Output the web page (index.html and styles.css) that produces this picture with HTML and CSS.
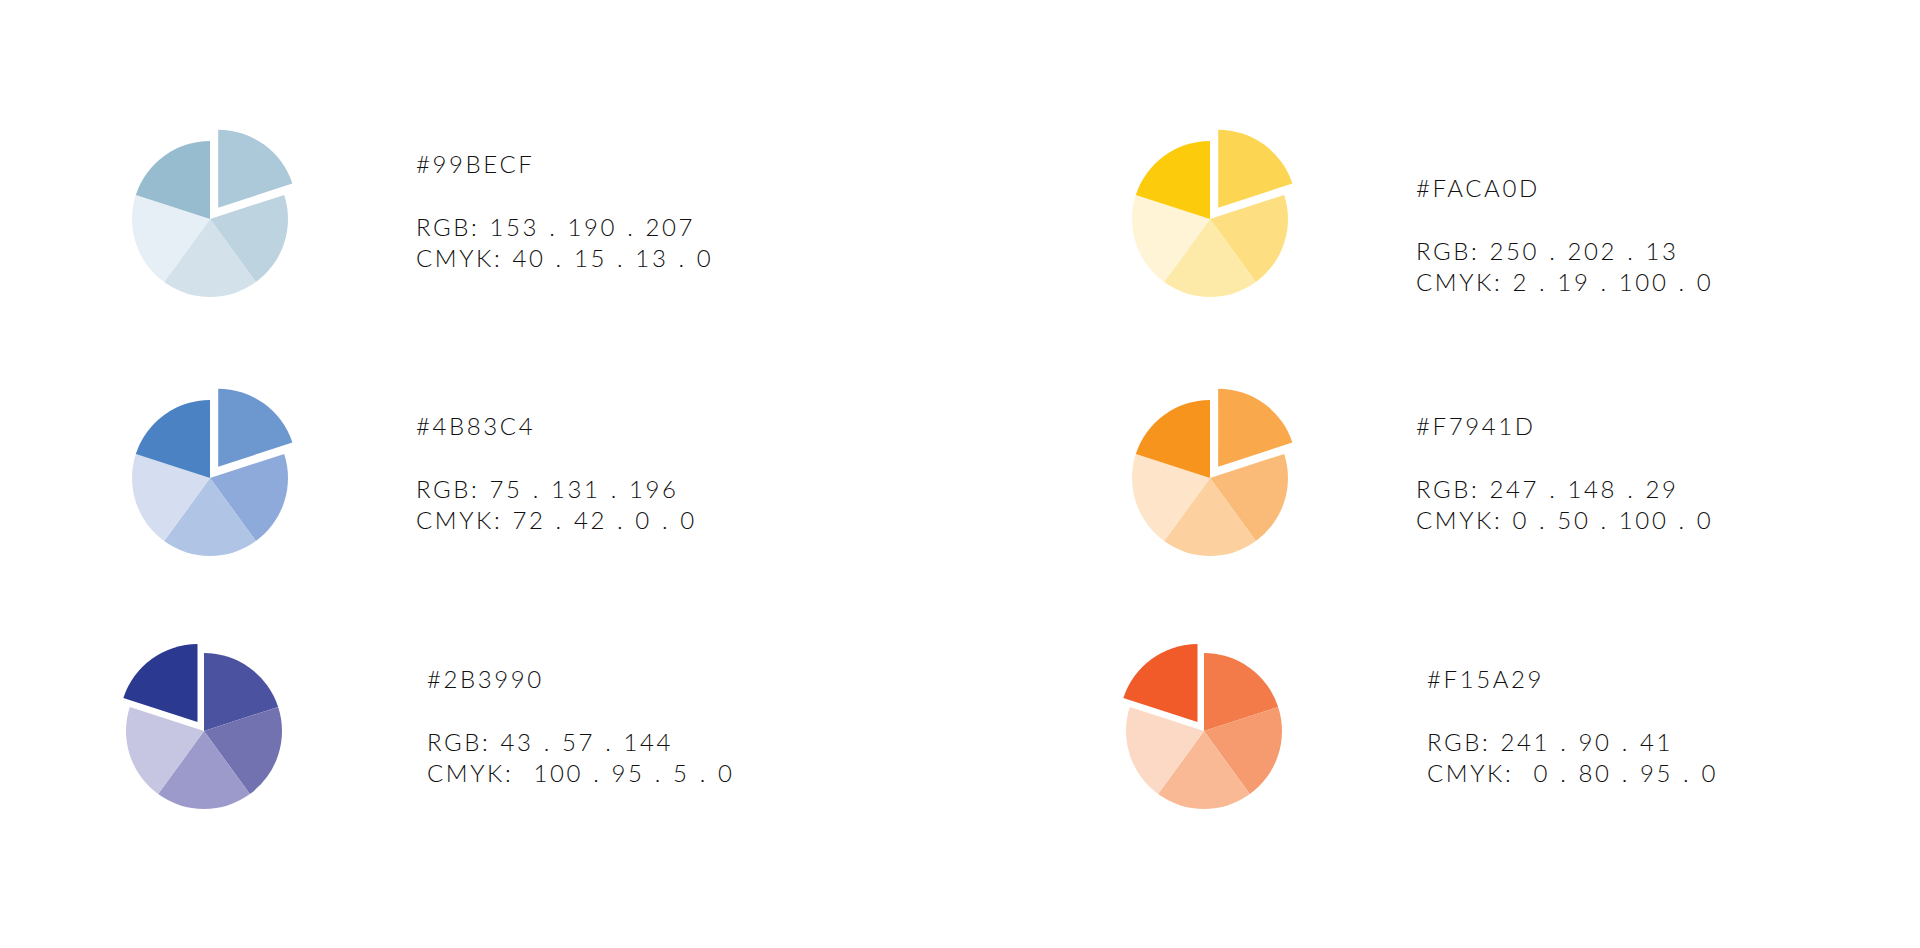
FILE: index.html
```html
<!DOCTYPE html>
<html lang="en">
<head>
<meta charset="utf-8">
<title>Colour palette</title>
<link rel="stylesheet" href="styles.css">
</head>
<body>
<main class="palette">
  <section class="swatch swatch--first pie-sky">
    <svg class="pie" viewBox="-90 -90 180 180" aria-hidden="true">
      <path class="slice slice-b" d="M0 0 L74.18 -24.1 A78 78 0 0 1 45.85 63.1 Z"/>
      <path class="slice slice-c" d="M0 0 L45.85 63.1 A78 78 0 0 1 -45.85 63.1 Z"/>
      <path class="slice slice-d" d="M0 0 L-45.85 63.1 A78 78 0 0 1 -74.18 -24.1 Z"/>
      <path class="slice slice-e" d="M0 0 L-74.18 -24.1 A78 78 0 0 1 0 -78 Z"/>
      <path class="slice slice-a out-right" d="M0 0 L0 -78 A78 78 0 0 1 74.18 -24.1 Z"/>
    </svg>
    <div class="info">
      <p class="hex">#99BECF</p>
      <p>RGB: 153 . 190 . 207</p>
      <p>CMYK: 40 . 15 . 13 . 0</p>
    </div>
  </section>

  <section class="swatch swatch--top-right pie-sun">
    <svg class="pie" viewBox="-90 -90 180 180" aria-hidden="true">
      <path class="slice slice-b" d="M0 0 L74.18 -24.1 A78 78 0 0 1 45.85 63.1 Z"/>
      <path class="slice slice-c" d="M0 0 L45.85 63.1 A78 78 0 0 1 -45.85 63.1 Z"/>
      <path class="slice slice-d" d="M0 0 L-45.85 63.1 A78 78 0 0 1 -74.18 -24.1 Z"/>
      <path class="slice slice-e" d="M0 0 L-74.18 -24.1 A78 78 0 0 1 0 -78 Z"/>
      <path class="slice slice-a out-right" d="M0 0 L0 -78 A78 78 0 0 1 74.18 -24.1 Z"/>
    </svg>
    <div class="info">
      <p class="hex">#FACA0D</p>
      <p>RGB: 250 . 202 . 13</p>
      <p>CMYK: 2 . 19 . 100 . 0</p>
    </div>
  </section>

  <section class="swatch pie-azure">
    <svg class="pie" viewBox="-90 -90 180 180" aria-hidden="true">
      <path class="slice slice-b" d="M0 0 L74.18 -24.1 A78 78 0 0 1 45.85 63.1 Z"/>
      <path class="slice slice-c" d="M0 0 L45.85 63.1 A78 78 0 0 1 -45.85 63.1 Z"/>
      <path class="slice slice-d" d="M0 0 L-45.85 63.1 A78 78 0 0 1 -74.18 -24.1 Z"/>
      <path class="slice slice-e" d="M0 0 L-74.18 -24.1 A78 78 0 0 1 0 -78 Z"/>
      <path class="slice slice-a out-right" d="M0 0 L0 -78 A78 78 0 0 1 74.18 -24.1 Z"/>
    </svg>
    <div class="info">
      <p class="hex">#4B83C4</p>
      <p>RGB: 75 . 131 . 196</p>
      <p>CMYK: 72 . 42 . 0 . 0</p>
    </div>
  </section>

  <section class="swatch pie-amber">
    <svg class="pie" viewBox="-90 -90 180 180" aria-hidden="true">
      <path class="slice slice-b" d="M0 0 L74.18 -24.1 A78 78 0 0 1 45.85 63.1 Z"/>
      <path class="slice slice-c" d="M0 0 L45.85 63.1 A78 78 0 0 1 -45.85 63.1 Z"/>
      <path class="slice slice-d" d="M0 0 L-45.85 63.1 A78 78 0 0 1 -74.18 -24.1 Z"/>
      <path class="slice slice-e" d="M0 0 L-74.18 -24.1 A78 78 0 0 1 0 -78 Z"/>
      <path class="slice slice-a out-right" d="M0 0 L0 -78 A78 78 0 0 1 74.18 -24.1 Z"/>
    </svg>
    <div class="info">
      <p class="hex">#F7941D</p>
      <p>RGB: 247 . 148 . 29</p>
      <p>CMYK: 0 . 50 . 100 . 0</p>
    </div>
  </section>

  <section class="swatch swatch--bottom pie-indigo">
    <svg class="pie" viewBox="-90 -90 180 180" aria-hidden="true">
      <path class="slice slice-a" d="M0 0 L0 -78 A78 78 0 0 1 74.18 -24.1 Z"/>
      <path class="slice slice-b" d="M0 0 L74.18 -24.1 A78 78 0 0 1 45.85 63.1 Z"/>
      <path class="slice slice-c" d="M0 0 L45.85 63.1 A78 78 0 0 1 -45.85 63.1 Z"/>
      <path class="slice slice-d" d="M0 0 L-45.85 63.1 A78 78 0 0 1 -74.18 -24.1 Z"/>
      <path class="slice slice-e out-left" d="M0 0 L-74.18 -24.1 A78 78 0 0 1 0 -78 Z"/>
    </svg>
    <div class="info">
      <p class="hex">#2B3990</p>
      <p>RGB: 43 . 57 . 144</p>
      <p>CMYK:&nbsp; 100 . 95 . 5 . 0</p>
    </div>
  </section>

  <section class="swatch swatch--bottom pie-flame">
    <svg class="pie" viewBox="-90 -90 180 180" aria-hidden="true">
      <path class="slice slice-a" d="M0 0 L0 -78 A78 78 0 0 1 74.18 -24.1 Z"/>
      <path class="slice slice-b" d="M0 0 L74.18 -24.1 A78 78 0 0 1 45.85 63.1 Z"/>
      <path class="slice slice-c" d="M0 0 L45.85 63.1 A78 78 0 0 1 -45.85 63.1 Z"/>
      <path class="slice slice-d" d="M0 0 L-45.85 63.1 A78 78 0 0 1 -74.18 -24.1 Z"/>
      <path class="slice slice-e out-left" d="M0 0 L-74.18 -24.1 A78 78 0 0 1 0 -78 Z"/>
    </svg>
    <div class="info">
      <p class="hex">#F15A29</p>
      <p>RGB: 241 . 90 . 41</p>
      <p>CMYK:&nbsp; 0 . 80 . 95 . 0</p>
    </div>
  </section>
</main>
</body>
</html>
```

FILE: styles.css
```css
* {
  box-sizing: border-box;
}

html, body {
  margin: 0;
  padding: 0;
  background: #ffffff;
}

body {
  width: 1920px;
  height: 948px;
  overflow: hidden;
  font-family: "Lato", "Liberation Sans", sans-serif;
  color: #111111;
}

.palette {
  display: grid;
  grid-template-columns: 1000px 800px;
  grid-template-rows: 259px 253px auto;
  padding: 129px 0 0 120px;
}

.swatch {
  display: flex;
  align-items: flex-start;
  gap: 116px;
}

.swatch--bottom {
  margin-left: -6px;
  gap: 133px;
}

.pie {
  flex: 0 0 180px;
  width: 180px;
  height: 180px;
  display: block;
  overflow: visible;
}

.out-right {
  transform: translate(8.2px, -11.3px);
}

.out-left {
  transform: translate(-6.5px, -8.9px);
}

.slice-a { fill: var(--a); }
.slice-b { fill: var(--b); }
.slice-c { fill: var(--c); }
.slice-d { fill: var(--d); }
.slice-e { fill: var(--e); }

.pie-sky {
  --e: #98bccf;
  --a: #abc9d8;
  --b: #bed3e0;
  --c: #d3e1ea;
  --d: #e6eff5;
}

.pie-azure {
  --e: #4a82c3;
  --a: #6d97cf;
  --b: #8eaadb;
  --c: #b0c4e6;
  --d: #d5ddf0;
}

.pie-indigo {
  --e: #2b3990;
  --a: #4b53a0;
  --b: #7372b1;
  --c: #9b9aca;
  --d: #c6c5e2;
}

.pie-sun {
  --e: #fbcb0c;
  --a: #fcd652;
  --b: #fddf82;
  --c: #feeaa8;
  --d: #fff4d5;
}

.pie-amber {
  --e: #f7941d;
  --a: #f9a84b;
  --b: #fbbb78;
  --c: #fdd19f;
  --d: #fee5c9;
}

.pie-flame {
  --e: #f15a29;
  --a: #f37b4a;
  --b: #f69a70;
  --c: #f9b995;
  --d: #fcd9c5;
}

.info {
  margin-top: 22px;
  font-size: 24px;
  font-weight: 300;
  line-height: 31px;
  letter-spacing: 2.6px;
  word-spacing: 1px;
  white-space: nowrap;
}

.swatch--first .info {
  margin-top: 19px;
}

.swatch--top-right .info {
  margin-top: 43px;
}

.info p {
  margin: 0;
}

.info .hex {
  margin-bottom: 32px;
}
```
